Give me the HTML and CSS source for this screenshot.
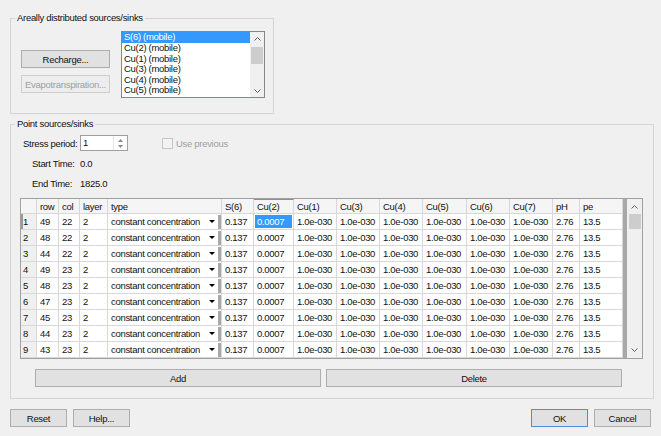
FILE: index.html
```html
<!DOCTYPE html>
<html lang="en">
<head>
    <meta charset="UTF-8">
    <meta name="viewport" content="width=device-width, initial-scale=1.0">
    <title>Sources/Sinks</title>
    <link rel="stylesheet" href="styles.css">
</head>
<body>

    <main class="dialog">

        <fieldset class="group areal">
            <legend>Areally distributed sources/sinks</legend>
            <div class="areal-body">
                <div class="areal-buttons">
                    <button class="btn">Recharge...</button>
                    <button class="btn" disabled>Evapotranspiration...</button>
                </div>
                <div class="listbox">
                    <ul class="items">
                        <li class="selected">S(6) (mobile)</li>
                        <li>Cu(2) (mobile)</li>
                        <li>Cu(1) (mobile)</li>
                        <li>Cu(3) (mobile)</li>
                        <li>Cu(4) (mobile)</li>
                        <li>Cu(5) (mobile)</li>
                    </ul>
                    <div class="vbar list-bar">
                        <span class="arrow"><svg width="7" height="4" viewBox="0 0 7 4"><polyline points="0.5,3.5 3.5,0.5 6.5,3.5" fill="none" stroke="#606060" stroke-width="1"/></svg></span>
                        <span class="thumb"></span>
                        <span class="arrow bottom"><svg width="7" height="4" viewBox="0 0 7 4"><polyline points="0.5,0.5 3.5,3.5 6.5,0.5" fill="none" stroke="#606060" stroke-width="1"/></svg></span>
                    </div>
                </div>
            </div>
        </fieldset>

        <fieldset class="group point">
            <legend>Point sources/sinks</legend>
            <div class="point-body">

                <div class="stress">
                    <span class="stress-label">Stress period:</span>
                    <div class="spin">
                        <span class="spin-value">1</span>
                        <span class="spin-arrows">
                            <svg width="5" height="3" viewBox="0 0 5 3"><polygon points="0,3 2.5,0 5,3" fill="#8a8a8a"/></svg>
                            <svg width="5" height="3" viewBox="0 0 5 3"><polygon points="0,0 2.5,3 5,0" fill="#8a8a8a"/></svg>
                        </span>
                    </div>
                    <span class="check"></span>
                    <span class="check-label">Use previous</span>
                </div>

                <div class="time first">
                    <span class="time-label">Start Time:</span>
                    <span>0.0</span>
                </div>
                <div class="time">
                    <span class="time-label">End Time:</span>
                    <span>1825.0</span>
                </div>

                <div class="grid">
                    <div class="table">
                        <div class="row head">
                            <span class="rh"></span><span>row</span><span>col</span><span>layer</span><span>type</span><span>S(6)</span><span class="curcol">Cu(2)</span><span>Cu(1)</span><span>Cu(3)</span><span>Cu(4)</span><span>Cu(5)</span><span>Cu(6)</span><span>Cu(7)</span><span>pH</span><span>pe</span>
                        </div>
                        <div class="row">
                            <span class="rh currow">1</span><span>49</span><span>22</span><span>2</span><span class="type">constant concentration<i class="drop"></i></span><span>0.137</span><span class="cur">0.0007</span><span>1.0e-030</span><span>1.0e-030</span><span>1.0e-030</span><span>1.0e-030</span><span>1.0e-030</span><span>1.0e-030</span><span>2.76</span><span>13.5</span>
                        </div>
                        <div class="row">
                            <span class="rh">2</span><span>48</span><span>22</span><span>2</span><span class="type">constant concentration<i class="drop"></i></span><span>0.137</span><span>0.0007</span><span>1.0e-030</span><span>1.0e-030</span><span>1.0e-030</span><span>1.0e-030</span><span>1.0e-030</span><span>1.0e-030</span><span>2.76</span><span>13.5</span>
                        </div>
                        <div class="row">
                            <span class="rh">3</span><span>44</span><span>22</span><span>2</span><span class="type">constant concentration<i class="drop"></i></span><span>0.137</span><span>0.0007</span><span>1.0e-030</span><span>1.0e-030</span><span>1.0e-030</span><span>1.0e-030</span><span>1.0e-030</span><span>1.0e-030</span><span>2.76</span><span>13.5</span>
                        </div>
                        <div class="row">
                            <span class="rh">4</span><span>49</span><span>23</span><span>2</span><span class="type">constant concentration<i class="drop"></i></span><span>0.137</span><span>0.0007</span><span>1.0e-030</span><span>1.0e-030</span><span>1.0e-030</span><span>1.0e-030</span><span>1.0e-030</span><span>1.0e-030</span><span>2.76</span><span>13.5</span>
                        </div>
                        <div class="row">
                            <span class="rh">5</span><span>48</span><span>23</span><span>2</span><span class="type">constant concentration<i class="drop"></i></span><span>0.137</span><span>0.0007</span><span>1.0e-030</span><span>1.0e-030</span><span>1.0e-030</span><span>1.0e-030</span><span>1.0e-030</span><span>1.0e-030</span><span>2.76</span><span>13.5</span>
                        </div>
                        <div class="row">
                            <span class="rh">6</span><span>47</span><span>23</span><span>2</span><span class="type">constant concentration<i class="drop"></i></span><span>0.137</span><span>0.0007</span><span>1.0e-030</span><span>1.0e-030</span><span>1.0e-030</span><span>1.0e-030</span><span>1.0e-030</span><span>1.0e-030</span><span>2.76</span><span>13.5</span>
                        </div>
                        <div class="row">
                            <span class="rh">7</span><span>45</span><span>23</span><span>2</span><span class="type">constant concentration<i class="drop"></i></span><span>0.137</span><span>0.0007</span><span>1.0e-030</span><span>1.0e-030</span><span>1.0e-030</span><span>1.0e-030</span><span>1.0e-030</span><span>1.0e-030</span><span>2.76</span><span>13.5</span>
                        </div>
                        <div class="row">
                            <span class="rh">8</span><span>44</span><span>23</span><span>2</span><span class="type">constant concentration<i class="drop"></i></span><span>0.137</span><span>0.0007</span><span>1.0e-030</span><span>1.0e-030</span><span>1.0e-030</span><span>1.0e-030</span><span>1.0e-030</span><span>1.0e-030</span><span>2.76</span><span>13.5</span>
                        </div>
                        <div class="row">
                            <span class="rh">9</span><span>43</span><span>23</span><span>2</span><span class="type">constant concentration<i class="drop"></i></span><span>0.137</span><span>0.0007</span><span>1.0e-030</span><span>1.0e-030</span><span>1.0e-030</span><span>1.0e-030</span><span>1.0e-030</span><span>1.0e-030</span><span>2.76</span><span>13.5</span>
                        </div>
                    </div>
                    <div class="gutter"></div>
                    <div class="vbar grid-bar">
                        <span class="arrow"><svg width="7" height="4" viewBox="0 0 7 4"><polyline points="0.5,3.5 3.5,0.5 6.5,3.5" fill="none" stroke="#606060" stroke-width="1"/></svg></span>
                        <span class="thumb"></span>
                        <span class="arrow bottom"><svg width="7" height="4" viewBox="0 0 7 4"><polyline points="0.5,0.5 3.5,3.5 6.5,0.5" fill="none" stroke="#606060" stroke-width="1"/></svg></span>
                    </div>
                </div>

                <div class="grid-buttons">
                    <button class="btn add">Add</button>
                    <button class="btn delete">Delete</button>
                </div>

            </div>
        </fieldset>

        <footer class="footer">
            <button class="btn std">Reset</button>
            <button class="btn std help">Help...</button>
            <button class="btn std ok">OK</button>
            <button class="btn std cancel">Cancel</button>
        </footer>

    </main>

</body>
</html>
```

FILE: styles.css
```css
*{ padding: 0; margin: 0; box-sizing: border-box; }

:root{
    --face: #f0f0f0;
    --line: #d5d5d5;
    --grid: #d8d8d8;
    --button: #e1e1e1;
    --button-border: #adadad;
    --gray-text: #a0a0a0;
    --select: #3399ff;
}

body{
    width: 661px;
    height: 436px;
    overflow: hidden;
    background-color: var(--face);
    font-family: "Liberation Sans", Arial, sans-serif;
    font-size: 9.5px;
    letter-spacing: -0.3px;
    color: #111;
}

.dialog{
    display: flex;
    flex-direction: column;
    padding: 12px 7px 0 10px;
}


/*   GROUP BOXES   */

.group{
    border: 1px solid var(--line);
    min-width: 0;
}
.group legend{
    margin-left: 4px;
    padding: 0 2px;
    line-height: 12px;
}

.btn{
    height: 18px;
    border: 1px solid var(--button-border);
    background-color: var(--button);
    font: inherit;
    letter-spacing: inherit;
    color: #111;
}
.btn:disabled{
    background-color: #ededed;
    border-color: #cdcdcd;
    color: var(--gray-text);
}


/*   AREALLY DISTRIBUTED   */

.areal{ width: 264px; }

.areal-body{
    display: flex;
    padding: 7px 8px 15px 10px;
}
.areal-buttons{
    display: flex;
    flex-direction: column;
    gap: 7px;
    width: 89px;
    margin-top: 19px;
}

.listbox{
    display: flex;
    width: 144px;
    height: 67px;
    margin-left: 11px;
    border: 1px solid #828790;
    background-color: #fff;
    overflow: hidden;
}
.items{
    flex: 1;
    list-style: none;
}
.items li{
    height: 10.6px;
    line-height: 10.6px;
    padding-left: 2px;
    white-space: nowrap;
}
.items .selected{
    height: 11px;
    background-color: var(--select);
    color: #fff;
}

.vbar{
    display: flex;
    flex-direction: column;
    align-items: center;
    background-color: var(--face);
}
.vbar .arrow{
    display: flex;
    align-items: center;
    justify-content: center;
    height: 13px;
}
.vbar .bottom{ margin-top: auto; }
.vbar .thumb{
    background-color: #cdcdcd;
}
.list-bar{ width: 14px; }
.list-bar .thumb{
    width: 12px;
    height: 17px;
    margin-top: 2px;
}


/*   POINT SOURCES   */

.point{
    width: 644px;
    margin-top: 4px;
}
.point-body{
    display: flex;
    flex-direction: column;
    padding: 5px 10px 11px 9px;
}

.stress{
    display: flex;
    align-items: center;
    height: 16px;
}
.stress-label{
    width: 57px;
    margin-left: 3px;
}
.spin{
    display: flex;
    width: 48px;
    height: 16px;
    border: 1px solid #a0a0a0;
    background-color: #fff;
}
.spin-value{
    flex: 1;
    padding-left: 2px;
    line-height: 14px;
}
.spin-arrows{
    display: flex;
    flex-direction: column;
    justify-content: space-around;
    align-items: center;
    width: 14px;
    padding: 1px 0;
    border-left: 1px solid #e6e6e6;
}
.check{
    width: 11px;
    height: 11px;
    margin-left: 34px;
    border: 1px solid #c6c6c6;
    background-color: #f2f2f2;
}
.check-label{
    margin-left: 3px;
    color: var(--gray-text);
}

.time{
    display: flex;
    align-items: center;
    height: 13px;
    margin-top: 7px;
}
.time.first{ margin-top: 6px; }
.time-label{
    width: 48px;
    margin-left: 12px;
}


/*   GRID   */

.grid{
    display: flex;
    height: 161px;
    margin-top: 8px;
    border: 1px solid #a0a0a0;
    background-color: #fff;
}
.table{ width: 602px; }

.row{
    display: grid;
    grid-template-columns: 16px 22px 21px 28px 114px 32px 40px 43px 43px 43px 44px 43px 43px 27px 43px;
    height: 16px;
}
.row span{
    display: flex;
    align-items: center;
    padding-left: 3px;
    border-right: 1px solid var(--grid);
    border-bottom: 1px solid var(--grid);
    white-space: nowrap;
    overflow: hidden;
}
.row.head{ height: 15px; }
.row.head span{ background-color: #f5f5f5; }
.row .curcol{ border-top: 1px solid #8f8f8f; }
.row .rh{
    padding-left: 2px;
    background-color: #f0f0f0;
}
.row .currow{ box-shadow: inset 2px 0 #9a9a9a; }

.row .type{ padding-right: 0; }
.drop{
    display: flex;
    align-items: center;
    justify-content: center;
    width: 15px;
    height: 14px;
    margin-left: auto;
    border-right: 3px solid #a8a8a8;
}
.drop::before{
    content: "";
    border-left: 3px solid transparent;
    border-right: 3px solid transparent;
    border-top: 3px solid #000;
}

.row .cur{
    background-color: var(--select);
    box-shadow: inset 0 0 0 1px #fff;
    color: #fff;
}

.gutter{
    width: 4px;
    background-color: #a8a8a8;
}
.grid-bar{ width: 15px; }
.grid-bar .arrow{ height: 15px; }
.grid-bar .thumb{
    width: 12px;
    height: 15px;
}
.grid-bar .bottom{ height: 16px; }

.grid-buttons{
    display: flex;
    gap: 5px;
    margin: 10px 0 0 15px;
}
.add{ width: 286px; }
.delete{ width: 296px; }


/*   FOOTER   */

.footer{
    display: flex;
    margin-top: 10px;
}
.std{ width: 57px; }
.help{ margin-left: 6px; }
.ok{
    margin-left: auto;
    border-color: #4a90d9;
}
.cancel{
    margin-left: 6px;
    margin-right: 3px;
}
```
